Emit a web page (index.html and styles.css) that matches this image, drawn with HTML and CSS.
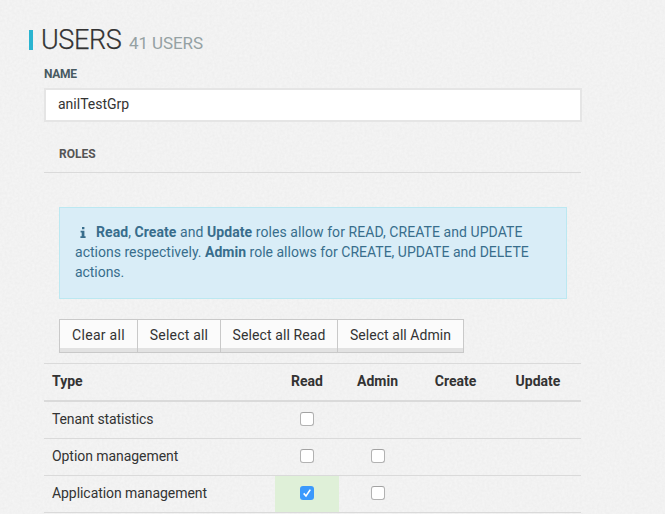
FILE: index.html
```html
<!DOCTYPE html>
<html lang="en">
<head>
<meta charset="utf-8">
<title>Users</title>
<link rel="stylesheet" href="styles.css">
</head>
<body>
<svg class="texture" aria-hidden="true">
  <filter id="grain" x="0" y="0" width="100%" height="100%" color-interpolation-filters="sRGB">
    <feTurbulence type="fractalNoise" baseFrequency="0.4" numOctaves="2" seed="4"/>
    <feColorMatrix values="0.035 0 0 0 0.93  0.035 0 0 0 0.93  0.035 0 0 0 0.93  0 0 0 0 1"/>
  </filter>
  <rect width="100%" height="100%" filter="url(#grain)"/>
</svg>
<main class="page">
  <header class="heading">
    <h1 class="title">USERS</h1>
    <span class="count">41 USERS</span>
  </header>
  <form class="group-form">
    <label class="label" for="name">NAME</label>
    <input class="name-input" id="name" type="text" value="anilTestGrp">
    <h2 class="roles-title"><span>ROLES</span></h2>
    <div class="roles-body">
      <div class="alert">
        <div class="line l1"><svg class="info" viewBox="0 0 6 11"><path d="M2 0h2.4v2.2H2zM.6 3.8h3.8v5.4h1.2V11H.4V9.2h1.3V5.6H.6z"/></svg><b>Read</b>, <b>Create</b> and <b>Update</b> roles allow for READ, CREATE and UPDATE</div>
        <div class="line l2">actions respectively. <b>Admin</b> role allows for CREATE, UPDATE and DELETE</div>
        <div class="line l3">actions.</div>
      </div>
      <div class="buttons">
        <button type="button" class="b1">Clear all</button><button type="button" class="b2">Select all</button><button type="button" class="b3">Select all Read</button><button type="button" class="b4">Select all Admin</button>
      </div>
    </div>
    <div class="table">
      <div class="row head"><span>Type</span><span>Read</span><span>Admin</span><span>Create</span><span>Update</span></div>
      <div class="row"><span class="r1">Tenant statistics</span><span><i class="check"></i></span></div>
      <div class="row"><span class="r2">Option management</span><span><i class="check"></i></span><span><i class="check"></i></span></div>
      <div class="row"><span class="r3">Application management</span><span class="granted"><i class="check on"><svg viewBox="0 0 14 14"><path d="M3.7 7.4 6 10l4.3-6.4"/></svg></i></span><span><i class="check"></i></span></div>
    </div>
  </form>
</main>
</body>
</html>
```
FILE: styles.css
```css
* { box-sizing: border-box; }
body {
  margin: 0;
  height: 514px;
  overflow: hidden;
  background: #f1f1f1;
  color: #333;
  font: 14px/20px Roboto, "Liberation Sans", sans-serif;
}
.texture { position: absolute; inset: 0; width: 100%; height: 100%; z-index: -1; }
.page { padding: 24px 0 0 29px; }
.heading { display: flex; align-items: baseline; height: 32px; white-space: nowrap; }
.heading::before { content: ""; width: 4px; height: 20px; background: #2ab4d0; align-self: flex-start; margin: 6px 8px 0 0; }
.title { margin: 0; font-size: 27px; line-height: 32px; font-weight: 300; letter-spacing: -.4px; width: 88px; -webkit-text-stroke: .25px #333; }
.count { font-size: 17px; color: #95a1a3; letter-spacing: -.1px; }
.group-form { width: 537px; margin-left: 15px; }
.label { display: block; margin-top: 9px; height: 18px; line-height: 18px; font-size: 12px; font-weight: 700; letter-spacing: -.3px; color: #485a61; }
.name-input {
  display: block; width: 538px; height: 34px; margin-top: 5px; padding: 0 12px 2px;
  border: 2px solid #e5e5e5; border-radius: 0; background: #fff;
  color: #333; font: inherit; letter-spacing: 0; outline: 0;
}
.roles-title {
  margin: 0; height: 51px; padding: 22px 15px 0; border-bottom: 1px solid #dadada;
  font-size: 12px; line-height: 20px; font-weight: 700; color: #555;
}
.roles-body { padding: 34px 14px 0 15px; }
.alert { height: 92px; padding: 14px 15px 16px; border: 1px solid #bce8f1; background: #d9edf7; color: #386d8c; }
.line { white-space: nowrap; }
.l1 { letter-spacing: .07px; }
.l2 { letter-spacing: .01px; }
.l3 { letter-spacing: -.05px; }
.info { width: 6px; height: 11px; margin: 0 10px 0 5px; fill: currentColor; vertical-align: -1px; }
.buttons { display: flex; margin-top: 20px; }
.buttons button {
  height: 34px; margin: 0 0 0 -1px; padding: 0 0 2px; border: 1px solid #c9c9c9;
  background: #fbfbfb; box-shadow: inset 0 -4px #e2e2e2; color: #333; font: inherit; white-space: nowrap;
}
.buttons .b1 { width: 79px; margin-left: 0; letter-spacing: .3px; }
.buttons .b2 { width: 84px; letter-spacing: .2px; }
.buttons .b3 { width: 118px; letter-spacing: .1px; }
.buttons .b4 { width: 127px; letter-spacing: .05px; }
.table { margin-top: 10px; border-top: 1px solid #dadada; }
.row { display: grid; grid-template-columns: 231px 64px 77px 79px 86px; height: 37px; border-bottom: 1px solid #dadada; line-height: 35px; }
.row > span { text-align: center; }
.row > span:first-child { text-align: left; padding-left: 8px; white-space: nowrap; }
.row > .r1 { letter-spacing: -.12px; }
.row > .r2, .row > .r3 { letter-spacing: -.06px; }
.row.head { height: 38px; border-bottom: 2px solid #dadada; font-weight: 700; }
.granted { background: #dff0d8; }
.check { display: block; width: 14px; height: 14px; margin: 10px auto; border: 1px solid #b2b2b2; border-top-color: #a2a2a2; border-radius: 3px; background: #fff; }
.check.on { border: 0; background: #3b99fc; }
.check svg { display: block; width: 14px; height: 14px; fill: none; stroke: #fff; stroke-width: 1.6; }
```
